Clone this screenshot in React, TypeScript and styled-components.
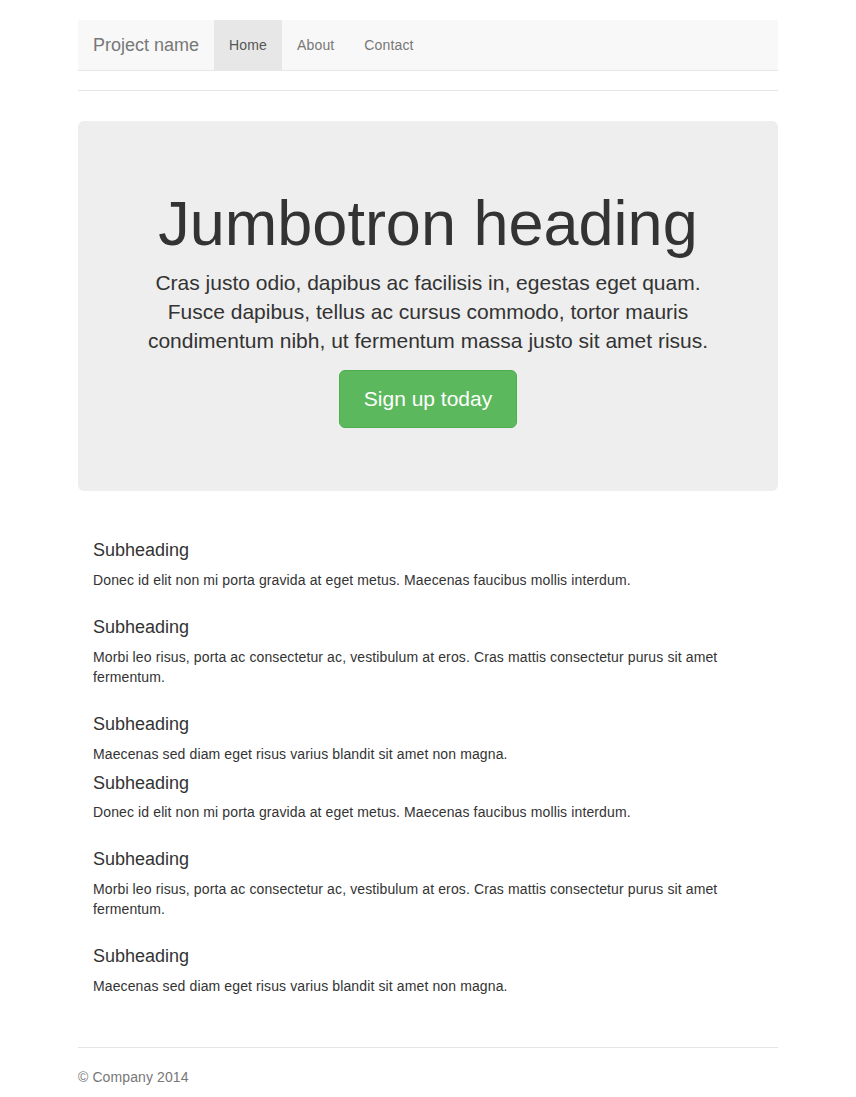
import React from "react";
import styled, { createGlobalStyle } from "styled-components";

const Global = createGlobalStyle`
  * { box-sizing: border-box; }
  html, body { margin: 0; padding: 0; }
  body {
    font-family: "Liberation Sans", Arial, Helvetica, sans-serif;
    font-size: 14px;
    line-height: 1.428571;
    color: #333;
    background: #fff;
    padding-top: 20px;
    padding-bottom: 20px;
  }
`;

const Container = styled.div`
  width: 700px;
  margin: 0 auto;
`;

const Header = styled.header`
  padding-bottom: 19px;
  border-bottom: 1px solid #e5e5e5;
  margin-bottom: 30px;
`;

const Navbar = styled.nav`
  display: flex;
  align-items: stretch;
  height: 51px;
  background: #f8f8f8;
  border-bottom: 1px solid #e7e7e7;
`;

const Brand = styled.a`
  display: block;
  padding: 15px;
  height: 50px;
  font-size: 18px;
  line-height: 20px;
  color: #777;
  text-decoration: none;
`;

const NavLink = styled.a<{ $active?: boolean }>`
  display: block;
  padding: 15px;
  height: 50px;
  font-size: 14px;
  line-height: 20px;
  letter-spacing: 0.15px;
  text-decoration: none;
  color: ${(p) => (p.$active ? "#555" : "#777")};
  background: ${(p) => (p.$active ? "#e7e7e7" : "transparent")};
`;

const Jumbotron = styled.section`
  background: #eee;
  border-radius: 6px;
  padding: 48px 60px;
  margin-bottom: 40px;
  text-align: center;
`;

const Title = styled.h1`
  margin: 20px 0 10px;
  font-size: 63px;
  line-height: 1.1;
  font-weight: 500;
  color: #333;
`;

const Lead = styled.p`
  margin: 0 0 15px;
  font-size: 21px;
  line-height: 29px;
  color: #333;
`;

const ButtonRow = styled.div`
  display: flex;
  justify-content: center;
  margin-bottom: 15px;
`;

const SignUp = styled.a`
  display: inline-block;
  padding: 14px 24px;
  font-size: 21px;
  line-height: 28px;
  color: #fff;
  background: #5cb85c;
  border: 1px solid #4cae4c;
  border-radius: 6px;
  text-decoration: none;
`;

const Marketing = styled.main`
  display: flow-root;
  padding: 0 15px;
  margin-bottom: 41px;
`;

const Column = styled.div``;

const SubHeading = styled.h4<{ $first?: boolean }>`
  margin: ${(p) => (p.$first ? "10px" : "28px")} 0 9px;
  font-size: 18px;
  line-height: 1.1;
  font-weight: 500;
  color: #333;
`;

const Text = styled.p`
  margin: 0 0 10px;
  font-size: 14px;
  line-height: 20px;
  letter-spacing: 0.12px;
  color: #333;
`;

const Footer = styled.footer`
  padding-top: 19px;
  border-top: 1px solid #e5e5e5;
  color: #777;
  p {
    margin: 0 0 10px;
    line-height: 20px;
    letter-spacing: 0.1px;
  }
`;

const items = [
  "Donec id elit non mi porta gravida at eget metus. Maecenas faucibus mollis interdum.",
  "Morbi leo risus, porta ac consectetur ac, vestibulum at eros. Cras mattis consectetur purus sit amet fermentum.",
  "Maecenas sed diam eget risus varius blandit sit amet non magna.",
];

export default function App() {
  return (
    <>
      <Global />
      <Container>
        <Header>
          <Navbar>
            <Brand href="#">Project name</Brand>
            <NavLink href="#" $active>
              Home
            </NavLink>
            <NavLink href="#">About</NavLink>
            <NavLink href="#">Contact</NavLink>
          </Navbar>
        </Header>

        <Jumbotron>
          <Title>Jumbotron heading</Title>
          <Lead>
            Cras justo odio, dapibus ac facilisis in, egestas eget quam. Fusce
            dapibus, tellus ac cursus commodo, tortor mauris condimentum nibh,
            ut fermentum massa justo sit amet risus.
          </Lead>
          <ButtonRow>
            <SignUp href="#">Sign up today</SignUp>
          </ButtonRow>
        </Jumbotron>

        <Marketing>
          {[0, 1].map((c) => (
            <Column key={c}>
              {items.map((t, i) => (
                <React.Fragment key={i}>
                  <SubHeading $first={i === 0}>Subheading</SubHeading>
                  <Text>{t}</Text>
                </React.Fragment>
              ))}
            </Column>
          ))}
        </Marketing>

        <Footer>
          <p>© Company 2014</p>
        </Footer>
      </Container>
    </>
  );
}
